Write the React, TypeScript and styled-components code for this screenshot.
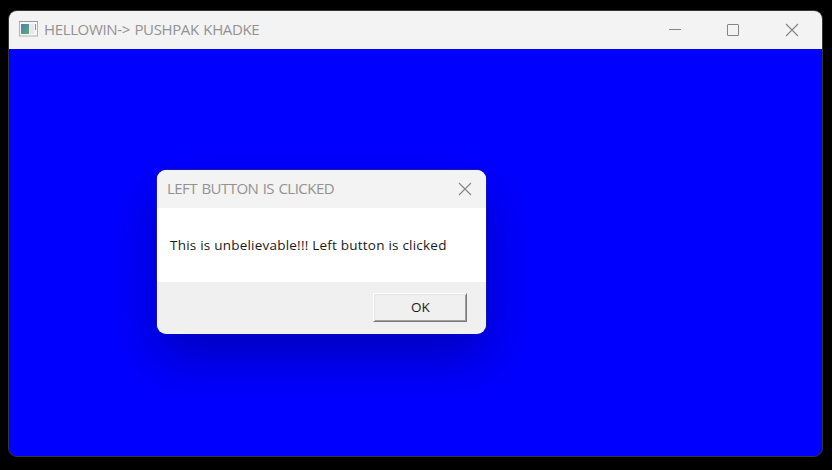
import React from "react";
import styled, { createGlobalStyle } from "styled-components";

const GlobalStyle = createGlobalStyle`
  html, body { margin: 0; background: #000; }
  *, *::before, *::after { box-sizing: border-box; }
`;

const Desktop = styled.main`
  width: 832px;
  height: 470px;
  padding: 10px 9px 13px 8px;
  overflow: hidden;
  background: #000;
  font-family: "Open Sans", "Noto Sans", sans-serif;
`;

const AppWindow = styled.section`
  display: flex;
  flex-direction: column;
  height: 447px;
  border: 1px solid #363636;
  border-radius: 9px;
  overflow: hidden;
  background: #363636;
`;

const Client = styled.div`
  position: relative;
  flex: 1;
  background: #0000ff;
`;

const TitleBar = styled.header<{ $inset: number }>`
  display: flex;
  align-items: center;
  flex: none;
  height: 38px;
  padding-left: ${({ $inset }) => $inset}px;
  background: #f3f3f3;
`;

const Title = styled.h1<{ $tracking: number }>`
  flex: 1;
  margin: 0;
  font-size: 15px;
  font-weight: 400;
  line-height: 36px;
  height: 38px;
  white-space: nowrap;
  letter-spacing: ${({ $tracking }) => $tracking}px;
  word-spacing: 1px;
  color: #929292;
`;

const AppIcon = styled.svg`
  display: block;
  flex: none;
  margin: -2px 6px 0 0;
`;

const CaptionButton = styled.button<{ $width: number }>`
  display: grid;
  place-items: center;
  width: ${({ $width }) => $width}px;
  height: 38px;
  padding: 0;
  border: 0;
  background: transparent;
  color: #858585;
`;

const Dialog = styled.section`
  position: absolute;
  left: 148px;
  top: 121px;
  width: 329px;
  height: 163px;
  display: flex;
  flex-direction: column;
  border-radius: 9px;
  background: #fff;
  box-shadow: 0 0 0 1px rgba(48, 48, 110, 0.45), 0 24px 50px rgba(0, 0, 0, 0.27);
`;

const DialogBar = styled(TitleBar)`
  border-radius: 9px 9px 0 0;
`;

const Message = styled.p`
  flex: 1;
  margin: 0;
  padding-left: 13px;
  font-size: 13.5px;
  font-weight: 500;
  line-height: 74px;
  white-space: nowrap;
  letter-spacing: 0.22px;
  color: #1a1a1a;
`;

const Footer = styled.footer`
  display: flex;
  justify-content: flex-end;
  flex: none;
  height: 52px;
  padding: 11px 19px 0 0;
  border-radius: 0 0 9px 9px;
  background: #f0f0f0;
`;

const OkButton = styled.button`
  width: 94px;
  height: 29px;
  padding: 0 0 2px 1px;
  border: 1px solid;
  border-color: #fff #787878 #787878 #fff;
  background: #f0f0f0;
  box-shadow: inset 1px 1px #e6e6e6, inset -1px -1px #a0a0a0;
  font: 500 13.5px/24px "Open Sans", "Noto Sans", sans-serif;
  color: #1a1a1a;
`;

const CloseGlyph = () => (
  <svg width="14" height="14" viewBox="0 0 14 14" fill="none" stroke="currentColor" strokeWidth="1.1">
    <path d="M1 1L13 13M13 1L1 13" />
  </svg>
);

export default function App() {
  return (
    <>
      <GlobalStyle />
      <Desktop>
        <AppWindow>
          <TitleBar $inset={10}>
            <AppIcon width="19" height="16" viewBox="0 0 19 16">
              <defs>
                <linearGradient id="pane" x1="0" y1="0" x2="1" y2="1">
                  <stop offset="0" stopColor="#4a7fb5" />
                  <stop offset="1" stopColor="#5cae70" />
                </linearGradient>
              </defs>
              <rect x="0.5" y="0.5" width="18" height="14.5" fill="#f6f6f6" stroke="#b0b2b6" />
              <path d="M0 0.5H19" stroke="#929aa6" />
              <rect x="2" y="3" width="8" height="10" fill="url(#pane)" />
              <rect x="11" y="3" width="4" height="10" fill="#e8e8e8" />
              <path d="M16.5 3V9" stroke="#65a59a" />
            </AppIcon>
            <Title $tracking={-0.36}>HELLOWIN-&gt; PUSHPAK KHADKE</Title>
            <CaptionButton $width={58} aria-label="Minimize">
              <svg width="14" height="14" viewBox="0 0 14 14" stroke="currentColor">
                <path d="M1 6.5H13" />
              </svg>
            </CaptionButton>
            <CaptionButton $width={58} aria-label="Maximize">
              <svg width="14" height="14" viewBox="0 0 14 14" fill="none" stroke="currentColor">
                <rect x="1.5" y="1.5" width="11" height="11" rx="0.5" />
              </svg>
            </CaptionButton>
            <CaptionButton $width={60} aria-label="Close">
              <CloseGlyph />
            </CaptionButton>
          </TitleBar>
          <Client>
            <Dialog role="dialog">
              <DialogBar $inset={10}>
                <Title as="h2" $tracking={-0.53}>LEFT BUTTON IS CLICKED</Title>
                <CaptionButton $width={42} aria-label="Close">
                  <CloseGlyph />
                </CaptionButton>
              </DialogBar>
              <Message>This is unbelievable!!! Left button is clicked</Message>
              <Footer>
                <OkButton>OK</OkButton>
              </Footer>
            </Dialog>
          </Client>
        </AppWindow>
      </Desktop>
    </>
  );
}
